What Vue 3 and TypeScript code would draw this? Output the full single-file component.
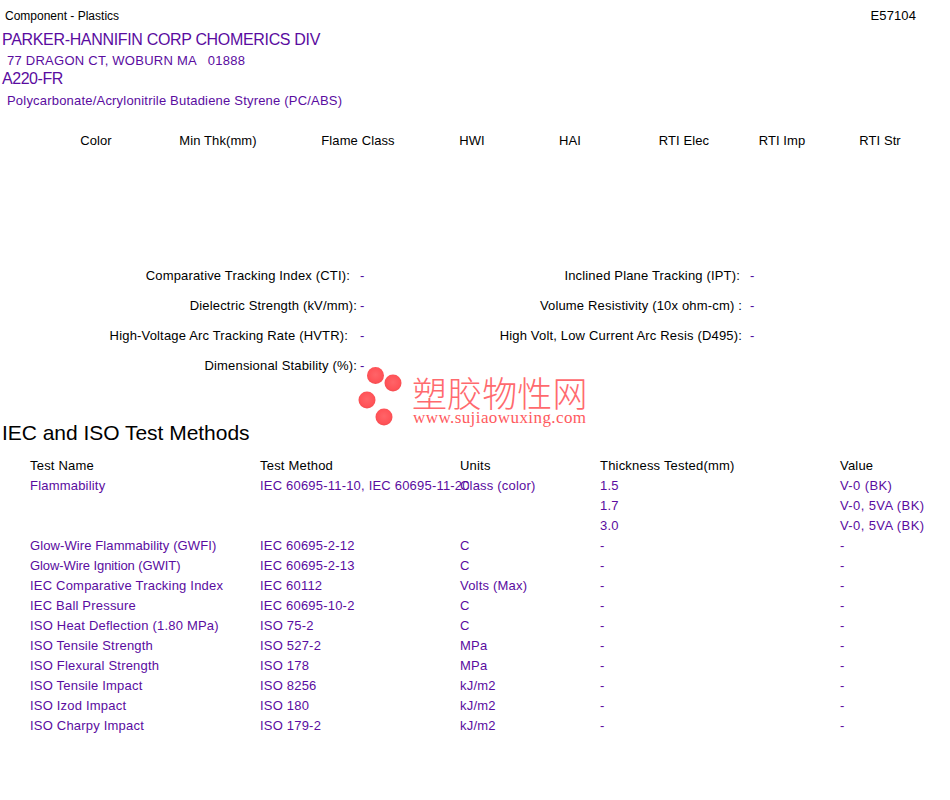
<script setup lang="ts">
interface Spec { label: string; gap: string }
const headers = ['Color', 'Min Thk(mm)', 'Flame Class', 'HWI', 'HAI', 'RTI Elec', 'RTI Imp', 'RTI Str']
const specs: { left: Spec; right?: Spec }[] = [
  { left: { label: 'Comparative Tracking Index (CTI):', gap: 'g10' }, right: { label: 'Inclined Plane Tracking (IPT):', gap: 'g10' } },
  { left: { label: 'Dielectric Strength (kV/mm):', gap: 'g3' }, right: { label: 'Volume Resistivity (10x ohm-cm) :', gap: 'g8' } },
  { left: { label: 'High-Voltage Arc Tracking Rate (HVTR):', gap: 'g12' }, right: { label: 'High Volt, Low Current Arc Resis (D495):', gap: 'g8' } },
  { left: { label: 'Dimensional Stability (%):', gap: 'g3' } },
]
const rows = [
  ['Flammability', 'IEC 60695-11-10, IEC 60695-11-20', 'Class (color)', '1.5', 'V-0 (BK)'],
  ['', '', '', '1.7', 'V-0, 5VA (BK)'],
  ['', '', '', '3.0', 'V-0, 5VA (BK)'],
  ['Glow-Wire Flammability (GWFI)', 'IEC 60695-2-12', 'C', '-', '-'],
  ['Glow-Wire Ignition (GWIT)', 'IEC 60695-2-13', 'C', '-', '-'],
  ['IEC Comparative Tracking Index', 'IEC 60112', 'Volts (Max)', '-', '-'],
  ['IEC Ball Pressure', 'IEC 60695-10-2', 'C', '-', '-'],
  ['ISO Heat Deflection (1.80 MPa)', 'ISO 75-2', 'C', '-', '-'],
  ['ISO Tensile Strength', 'ISO 527-2', 'MPa', '-', '-'],
  ['ISO Flexural Strength', 'ISO 178', 'MPa', '-', '-'],
  ['ISO Tensile Impact', 'ISO 8256', 'kJ/m2', '-', '-'],
  ['ISO Izod Impact', 'ISO 180', 'kJ/m2', '-', '-'],
  ['ISO Charpy Impact', 'ISO 179-2', 'kJ/m2', '-', '-'],
]
const tableHead = ['Test Name', 'Test Method', 'Units', 'Thickness Tested(mm)', 'Value']
const cellClass = (text: string, col: number): string => {
  if (text === 'Glow-Wire Flammability (GWFI)') return 'snug'
  if (text === 'Glow-Wire Ignition (GWIT)') return 'tight'
  return col === 4 ? 'wide' : ''
}
</script>

<template>
  <div class="page">
    <div class="topbar"><span>Component - Plastics</span><span class="file">E57104</span></div>
    <div class="company">PARKER-HANNIFIN CORP CHOMERICS DIV</div>
    <div class="address">77 DRAGON CT, WOBURN MA &nbsp; 01888</div>
    <div class="grade">A220-FR</div>
    <div class="material">Polycarbonate/Acrylonitrile Butadiene Styrene (PC/ABS)</div>

    <div class="props">
      <div v-for="h in headers" :key="h">{{ h }}</div>
    </div>

    <div class="specs">
      <div v-for="(s, i) in specs" :key="i" class="spec-row">
        <div class="spec-label" :class="s.left.gap">{{ s.left.label }}</div>
        <div class="dash">-</div>
        <template v-if="s.right">
          <div class="spec-label" :class="s.right.gap">{{ s.right.label }}</div>
          <div class="dash">-</div>
        </template>
      </div>
    </div>

    <h2 class="section">IEC and ISO Test Methods</h2>

    <div class="tests">
      <div class="trow thead">
        <div v-for="h in tableHead" :key="h">{{ h }}</div>
      </div>
      <div v-for="(r, i) in rows" :key="i" class="trow">
        <div v-for="(c, j) in r" :key="j" :class="cellClass(c, j)">{{ c }}</div>
      </div>
    </div>

    <div class="watermark">
      <svg class="balls" width="50" height="62" viewBox="0 0 50 62">
        <defs>
          <radialGradient id="ball" cx="50%" cy="45%" r="55%">
            <stop offset="0%" stop-color="#ff6468" />
            <stop offset="75%" stop-color="#ff5358" />
            <stop offset="100%" stop-color="#f44c50" />
          </radialGradient>
        </defs>
        <circle cx="17.500" cy="8.500" r="8.500" fill="url(#ball)" />
        <circle cx="35" cy="16" r="8.500" fill="url(#ball)" />
        <circle cx="9" cy="33" r="8.500" fill="url(#ball)" />
        <circle cx="26" cy="50" r="8.500" fill="url(#ball)" />
      </svg>
      <div class="wm-text">
        <div class="wm-cn">塑胶物性网</div>
        <div class="wm-url">www.sujiaowuxing.com</div>
      </div>
    </div>
  </div>
</template>

<style>
body { background: #fff; }
</style>

<style scoped>
.page {
  position: relative;
  width: 950px;
  height: 800px;
  overflow: hidden;
  background: #fff;
  color: #000;
  font-family: "Liberation Sans", Arial, sans-serif;
  font-size: 13px;
  letter-spacing: 0.2px;
}
.topbar {
  display: flex;
  justify-content: space-between;
  padding: 9px 34px 0 5px;
  box-sizing: border-box;
  height: 31px;
  line-height: 14px;
  font-size: 12px;
  letter-spacing: 0;
}
.file { font-size: 13px; letter-spacing: 0.1px; }
.company, .address, .grade, .material { color: #5a0ca0; white-space: nowrap; }
.company { height: 20px; line-height: 18px; font-size: 16px; letter-spacing: -0.33px; padding-left: 2px; }
.address { height: 20px; line-height: 20px; padding-left: 7px; letter-spacing: 0.25px; }
.grade { height: 20px; line-height: 16px; font-size: 16px; letter-spacing: -0.45px; padding-left: 2px; }
.material { height: 20px; line-height: 20px; padding-left: 7px; }
.props {
  display: grid;
  grid-template-columns: 120px 124px 156px 72px 124px 104px 92px 104px;
  margin: 20px 0 0 36px;
  height: 20px;
  line-height: 20px;
  text-align: center;
  letter-spacing: 0.1px;
}
.specs { margin-top: 115px; }
.spec-row {
  display: grid;
  grid-template-columns: 360px 30px 360px 30px;
  height: 30px;
  line-height: 20px;
}
.spec-label { text-align: right; white-space: nowrap; letter-spacing: 0.17px; }
.g3 { padding-right: 3px; }
.g8 { padding-right: 8px; }
.g10 { padding-right: 10px; }
.g12 { padding-right: 12px; }
.dash { color: #4a0ca0; }
.section {
  margin: 29px 0 0;
  height: 36px;
  line-height: 36px;
  padding-left: 2px;
  font-size: 21px;
  font-weight: 400;
  letter-spacing: -0.03px;
}
.tests { margin-top: 5px; padding-left: 30px; }
.trow {
  display: grid;
  grid-template-columns: 230px 200px 140px 240px 100px;
  height: 20px;
  line-height: 20px;
  color: #5a0ca0;
  white-space: nowrap;
}
.thead { color: #000; }
.snug { letter-spacing: 0.1px; }
.tight { letter-spacing: -0.08px; }
.wide { letter-spacing: 0.4px; }
.watermark {
  position: absolute;
  left: 358px;
  top: 367px;
  display: flex;
  pointer-events: none;
  letter-spacing: 0;
}
.wm-text { margin: 8px 0 0 5px; }
.wm-cn {
  height: 34px;
  line-height: 34px;
  margin-left: -1px;
  font-family: "Noto Sans CJK SC", sans-serif;
  font-size: 35px;
  font-weight: 300;
  letter-spacing: 0.1px;
  color: #ff6a6e;
}
.wm-url {
  line-height: 18px;
  font-family: "Liberation Serif", serif;
  font-size: 17px;
  letter-spacing: 0.42px;
  color: #ff5a5e;
}
</style>
